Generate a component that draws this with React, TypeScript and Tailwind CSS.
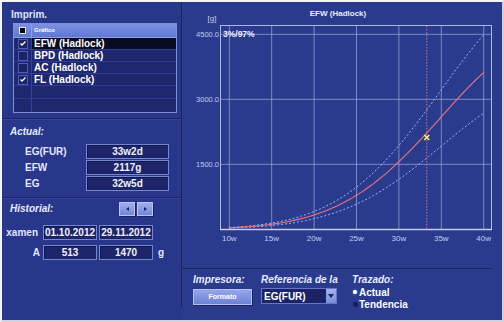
import React from 'react';

const rows = [
  { label: 'EFW (Hadlock)', checked: true, selected: true, box: true },
  { label: 'BPD (Hadlock)', checked: false, selected: false, box: true },
  { label: 'AC (Hadlock)', checked: false, selected: false, box: true },
  { label: 'FL (Hadlock)', checked: true, selected: false, box: true },
  { label: '', checked: false, selected: false, box: false },
  { label: '', checked: false, selected: false, box: false },
];

const Field = ({ children, className = '' }: { children: React.ReactNode; className?: string }) => (
  <div
    className={`h-[15px] flex items-center justify-center border border-[#7687d2] bg-[#1d2568] shadow-[inset_1px_1px_0_#121850] text-[10px] font-bold text-[#eef1ff] leading-none ${className}`}
  >
    {children}
  </div>
);

const Check = () => (
  <svg width="6" height="5" viewBox="0 0 6 5" className="absolute left-[1px] top-[1px]">
    <path d="M0.5 2.5 L2 4 L5.5 0.5" stroke="#ffffff" strokeWidth="1.3" fill="none" />
  </svg>
);

function Chart() {
  const X = (w: number) => 47.3 + (w - 10) * 8.48;
  const Y = (v: number) => 227.3 - (v * 65) / 1500;
  const hadlock = (w: number) => Math.exp(0.578 + 0.332 * w - 0.00354 * w * w);
  const curve = (f: number) => {
    let s = '';
    for (let w = 10; w <= 40.001; w += 0.5) s += `${X(w).toFixed(1)},${Y(hadlock(w) * f).toFixed(1)} `;
    return s.trim();
  };
  const weeks = [10, 15, 20, 25, 30, 35, 40];
  const gridY = [1500, 3000, 4500];
  const cx = X(33 + 2 / 7);
  const cy = Y(2117);
  const txt = "'Liberation Sans', Arial, sans-serif";

  return (
    <svg width="310" height="266" viewBox="0 0 310 266" className="block">
      <text x="156" y="14" textAnchor="middle" fontFamily={txt} fontSize="8" fontWeight="bold" fill="#e8ecff">
        EFW (Hadlock)
      </text>
      <text x="30" y="19" textAnchor="middle" fontFamily={txt} fontSize="8" fill="#c3cbef">
        [g]
      </text>
      {gridY.map((v) => (
        <g key={v}>
          <line x1="38" x2="309.7" y1={Y(v)} y2={Y(v)} stroke="#9aa4d6" strokeWidth="1" opacity="0.75" />
          <text x="37" y={Y(v) + 2.8} textAnchor="end" fontFamily={txt} fontSize="7.5" fill="#c3cbef">
            {v.toFixed(1)}
          </text>
        </g>
      ))}
      {weeks.map((w) => (
        <g key={w}>
          <line x1={X(w)} x2={X(w)} y1="23" y2="227.3" stroke="#9aa4d6" strokeWidth="1" opacity="0.75" />
          <text x={X(w)} y="238.5" textAnchor="middle" fontFamily={txt} fontSize="8" fill="#c3cbef">
            {w}w
          </text>
        </g>
      ))}
      <rect x="38.5" y="23.5" width="271" height="204" fill="none" stroke="#aeb7e2" strokeWidth="1" />
      <line x1="38" x2="310" y1="227.5" y2="227.5" stroke="#c4cbec" strokeWidth="1.5" />
      <text x="41" y="35" fontFamily={txt} fontSize="8.5" fontWeight="bold" fill="#f2f4ff">
        3%/97%
      </text>
      <polyline points={curve(1.24)} fill="none" stroke="#9fb6ff" strokeWidth="1" strokeDasharray="2 2" />
      <polyline points={curve(0.74)} fill="none" stroke="#9fb6ff" strokeWidth="1" strokeDasharray="2 2" />
      <polyline points={curve(1)} fill="none" stroke="#e8767e" strokeWidth="1.1" />
      <line x1={cx} x2={cx} y1="24" y2="227" stroke="#d8689a" strokeWidth="1" strokeDasharray="1.5 1.5" />
      <path
        d={`M${cx - 2.5} ${cy - 2.5} L${cx + 2.5} ${cy + 2.5} M${cx + 2.5} ${cy - 2.5} L${cx - 2.5} ${cy + 2.5}`}
        stroke="#fbff6a"
        strokeWidth="1.4"
      />
    </svg>
  );
}

export default function App() {
  return (
    <div className="w-[504px] h-[322px] border-2 border-t-[#f4f5f8] border-l-[#f4f5f8] border-r-[#cfd2da] border-b-[#cfd2da] flex bg-[#2a3a8d] text-[#e8ecff] font-['Liberation_Sans',Arial,sans-serif] overflow-hidden">
      {/* left panel */}
      <div className="w-[179px] shrink-0 flex flex-col bg-[#29378a]">
        <section className="h-[116px] pt-[7px] shrink-0">
          <div className="pl-[9px] text-[10px] leading-[12px] font-bold text-[#dfe5ff]">Imprim.</div>
          <div className="ml-[11px] mt-[2px] w-[164px] border border-[#7f90da] bg-[#1f286f]">
            <div className="h-[14px] flex bg-gradient-to-b from-[#7b92e2] to-[#6078d2] border-b border-[#8da0e6]">
              <div className="w-[18px] flex items-center justify-center border-r border-[#8da0e6]">
                <div className="w-[7px] h-[7px] bg-black border border-[#e0e6ff]" />
              </div>
              <div className="flex items-center pl-[2px] text-[6px] font-bold text-white">Gráfico</div>
            </div>
            {rows.map((r, i) => (
              <div key={i} className={`${i < 4 ? 'h-[12px]' : 'h-[13px]'} flex border-b border-[#2f3b92] last:border-b-0`}>
                <div className="w-[18px] flex items-center justify-center border-r border-[#34419a]">
                  {r.box && (
                    <div className="relative w-[10px] h-[10px] border border-[#4c5db6] bg-[#1b2367]">
                      {r.checked && <Check />}
                    </div>
                  )}
                </div>
                <div className={`flex-1 flex items-center pl-[2px] text-[10px] font-bold text-white ${r.selected ? 'bg-[#080a22]' : ''}`}>
                  {r.label}
                </div>
              </div>
            ))}
          </div>
        </section>
        <div className="h-px bg-[#1c2569]" />
        <div className="h-px bg-[#3646a0]" />
        <section className="h-[77px] pt-[6px] shrink-0">
          <div className="pl-[8px] text-[10px] leading-[12px] font-bold italic text-[#e6ebff]">Actual:</div>
          <div className="mt-[6px] flex flex-col gap-[1px]">
            {[
              ['EG(FUR)', '33w2d'],
              ['EFW', '2117g'],
              ['EG', '32w5d'],
            ].map(([l, v]) => (
              <div key={l} className="flex items-center">
                <div className="w-[84px] pl-[23px] text-[10px] font-bold text-[#e2e7ff] whitespace-nowrap">{l}</div>
                <Field className="w-[83px]">{v}</Field>
              </div>
            ))}
          </div>
        </section>
        <div className="h-px bg-[#1c2569]" />
        <div className="h-px bg-[#3646a0]" />
        <section className="flex-1 pt-[2px]">
          <div className="flex items-center h-[15px]">
            <div className="w-[117px] pl-[8px] text-[10px] font-bold italic text-[#e6ebff]">Historial:</div>
            <div className="flex gap-[2px]">
              {['left', 'right'].map((d) => (
                <div
                  key={d}
                  className="w-[16px] h-[14px] flex items-center justify-center bg-gradient-to-b from-[#9eaeee] to-[#7487d6] border border-[#b8c4f4] shadow-[1px_1px_0_#1a2164]"
                >
                  <div
                    className={
                      d === 'left'
                        ? 'w-0 h-0 border-y-[2.5px] border-y-transparent border-r-[3px] border-r-[#1a2266]'
                        : 'w-0 h-0 border-y-[2.5px] border-y-transparent border-l-[3px] border-l-[#1a2266]'
                    }
                  />
                </div>
              ))}
            </div>
          </div>
          <div className="mt-[9px] flex items-center">
            <div className="ml-[4px] w-[35px] overflow-hidden flex justify-end pr-[3px] text-[10px] font-bold text-[#e2e7ff] whitespace-nowrap">
              Examen
            </div>
            <Field className="ml-[2px] w-[54px]">01.10.2012</Field>
            <Field className="ml-[2px] w-[54px]">29.11.2012</Field>
          </div>
          <div className="mt-[5px] flex items-center">
            <div className="ml-[4px] w-[35px] flex justify-end pr-[1px] text-[10px] font-bold text-[#e2e7ff]">A</div>
            <Field className="ml-[2px] w-[54px]">513</Field>
            <Field className="ml-[2px] w-[54px]">1470</Field>
            <div className="ml-[5px] text-[10px] font-bold text-[#e2e7ff]">g</div>
          </div>
        </section>
      </div>
      {/* divider */}
      <div className="w-px shrink-0 bg-[#1a2366] mb-[12px]" />
      {/* right panel */}
      <div className="flex-1 flex flex-col pr-[10px]">
        <div className="w-[310px] h-[266px] shrink-0">
          <Chart />
        </div>
        <div className="w-[310px] h-px bg-[#1c2569]" />
        <div className="flex pl-[11px] pt-[5px]">
          <div className="w-[68px]">
            <div className="text-[10px] leading-[12px] font-bold italic text-[#e6ebff]">Impresora:</div>
            <div className="mt-[3px] w-[59px] h-[16px] flex items-center justify-center bg-gradient-to-b from-[#94a6ec] to-[#6d81d4] border border-[#b4c1f4] shadow-[1px_1px_0_#1a2164] text-[7px] font-bold text-white">
              Formato
            </div>
          </div>
          <div className="w-[91px]">
            <div className="text-[10px] leading-[12px] font-bold italic text-[#e6ebff] whitespace-nowrap">Referencia de la</div>
            <div className="mt-[2px] w-[76px] h-[16px] flex border border-[#6676c6] bg-[#1b2266]">
              <div className="flex-1 flex items-center pl-[2px] text-[10px] font-bold text-white">EG(FUR)</div>
              <div className="w-[10px] flex items-center justify-center bg-gradient-to-b from-[#a2b2f0] to-[#7a8dd8]">
                <div className="w-0 h-0 border-x-[3px] border-x-transparent border-t-[4px] border-t-[#1b2266]" />
              </div>
            </div>
          </div>
          <div>
            <div className="text-[10px] leading-[12px] font-bold italic text-[#e6ebff]">Trazado:</div>
            <div className="flex items-center h-[12px] mt-[0px]">
              <div className="ml-[1px] w-[4px] h-[4px] rounded-full bg-white shadow-[0_0_2px_#cfd8ff]" />
              <span className="ml-[2px] text-[10px] font-bold text-white">Actual</span>
            </div>
            <div className="flex items-center h-[12px]">
              <div className="ml-[1px] w-[5px] h-[5px] rounded-full bg-[#161d5a]" />
              <span className="ml-[1px] text-[10px] font-bold text-white">Tendencia</span>
            </div>
          </div>
        </div>
      </div>
    </div>
  );
}
